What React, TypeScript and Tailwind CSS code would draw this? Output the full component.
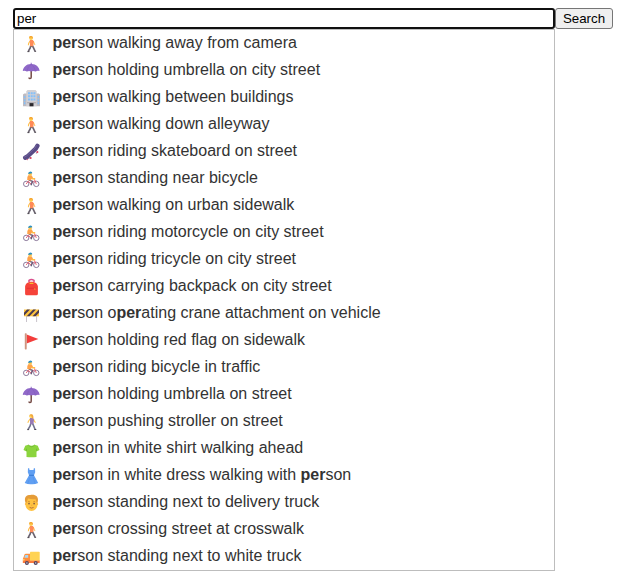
import React from "react";

type IconName =
  | "walk" | "umbrella" | "building" | "skate" | "bike" | "backpack" | "barrier"
  | "flag" | "woman" | "shirt" | "dress" | "man" | "truck";

const rows: [IconName, string][] = [
  ["walk", "person walking away from camera"],
  ["umbrella", "person holding umbrella on city street"],
  ["building", "person walking between buildings"],
  ["walk", "person walking down alleyway"],
  ["skate", "person riding skateboard on street"],
  ["bike", "person standing near bicycle"],
  ["walk", "person walking on urban sidewalk"],
  ["bike", "person riding motorcycle on city street"],
  ["bike", "person riding tricycle on city street"],
  ["backpack", "person carrying backpack on city street"],
  ["barrier", "person operating crane attachment on vehicle"],
  ["flag", "person holding red flag on sidewalk"],
  ["bike", "person riding bicycle in traffic"],
  ["umbrella", "person holding umbrella on street"],
  ["woman", "person pushing stroller on street"],
  ["shirt", "person in white shirt walking ahead"],
  ["dress", "person in white dress walking with person"],
  ["man", "person standing next to delivery truck"],
  ["walk", "person crossing street at crosswalk"],
  ["truck", "person standing next to white truck"],
];

const icons: Record<IconName, React.ReactNode> = {
  walk: (
    <>
      <path d="M8.9 10.2L8.2 13L6.4 16.2M10 10.2L11.4 12.6L13 16" fill="none" stroke="#6b6470" strokeWidth="1.7" />
      <path d="M5.4 16.6h2M12.3 16.3h1.8" stroke="#443e47" strokeWidth="1" />
      <path d="M8 6L6.6 8.4L6.4 10.2M11.2 6L12.2 8.4L13 9.8" fill="none" stroke="#ffc04d" strokeWidth="1.1" />
      <path d="M7.8 4.9h3l1 1.7-.6 4.6H8z" fill="#ff8a58" />
      <circle cx="9" cy="3" r="1.9" fill="#ffc847" />
      <path d="M7 2.8C6.9.5 10.8.4 10.9 2.9l-.6.9-.6-1.4z" fill="#f5a636" />
    </>
  ),
  umbrella: (
    <>
      <path d="M9.2 8V15.2Q9.2 16.6 8 16.6Q7 16.6 7 15.5" fill="none" stroke="#754b46" strokeWidth="1.5" />
      <path d="M8.7.8h1v1.1C14 2 17.4 5 17.6 9.1Q15.7 8.4 13.6 9.4Q11.3 8.5 9.2 9.4Q7 8.5 4.9 9.4Q2.7 8.4.8 9.1C1 5.1 4.4 2 8.7 1.9z" fill="#8f68c8" />
      <path d="M5 9.2Q5.6 4.5 9.2 2.2Q12.8 4.8 13.5 9.2" fill="none" stroke="#7e56b5" strokeWidth=".4" />
    </>
  ),
  building: (
    <>
      <path d="M1 5.6L2.3 4.4H16.8L18 5.6V17.2H1z" fill="#bebbc1" />
      <path d="M4.3 2.2L5.5 1h8l1.2 1.2v15H4.3z" fill="#d2d0d4" />
      <path d="M6 3.2h2v2H6zm2.7 0h2v2h-2zm2.7 0h2v2h-2zM6 6.3h2v2H6zm2.7 0h2v2h-2zm2.7 0h2v2h-2zM6 9.4h2v2H6zm2.7 0h2v2h-2zm2.7 0h2v2h-2zM1.9 7h1.5v2H1.9zm0 3.2h1.5v2H1.9zm0 3.1h1.5v2H1.9zM15.6 7h1.5v2h-1.5zm0 3.2h1.5v2h-1.5zm0 3.1h1.5v2h-1.5z" fill="#84c0fa" />
      <path d="M5 13h9v1.3H5z" fill="#b3b0b6" />
      <path d="M7.5 14.1h4v3.2h-4z" fill="#2b292d" />
    </>
  ),
  skate: (
    <>
      <path d="M6.2 15.8L8.4 14.2M14 10.4L15.8 8.8" stroke="#b3a6b8" strokeWidth="1.3" />
      <path d="M3.2 14.7L5.4 13.5L13.8 5.6L15.4 2.9" fill="none" stroke="#584b86" strokeWidth="4.4" strokeLinecap="round" strokeLinejoin="round" />
      <path d="M2.4 14.1L4.8 12.8L13 5L14.3 2.6" fill="none" stroke="#74679f" strokeWidth=".9" strokeLinecap="round" />
      <circle cx="8.7" cy="14.9" r="1" fill="#d83a5b" />
      <circle cx="15.4" cy="8.9" r="1" fill="#d83a5b" />
      <circle cx="5.3" cy="16.6" r=".6" fill="#d83a5b" />
    </>
  ),
  bike: (
    <>
      <circle cx="4.2" cy="13.9" r="2.7" fill="#fff" stroke="#8d7b9c" strokeWidth="1" />
      <circle cx="14.3" cy="13.9" r="2.7" fill="#fff" stroke="#8d7b9c" strokeWidth="1" />
      <path d="M4.2 13.9L6.3 11.2L8.8 14L12.6 10.8M14.3 13.9L12.5 9.4" fill="none" stroke="#ed5064" strokeWidth=".9" />
      <path d="M6.7 9.9L10.4 11.4L9 15.2" fill="none" stroke="#675d7b" strokeWidth="1.5" />
      <path d="M9.4 6.4L10.7 8.8L13.2 8.8" fill="none" stroke="#ffbd47" strokeWidth="1.4" />
      <path d="M6.2 5.2L9.6 5.3L10.5 7.7L8.6 10.6L5.2 10.1Q4.7 7 6.2 5.2z" fill="#ffa24a" />
      <circle cx="8.2" cy="4" r="1.8" fill="#ffc64d" />
      <path d="M6.1 4Q6.1 1.6 8.4 1.5Q10.4 1.8 10.3 3.3z" fill="#2c91c2" />
    </>
  ),
  backpack: (
    <>
      <path d="M7 4V2.4Q9.4.6 12 2.4V4" fill="none" stroke="#d94f8c" strokeWidth="1.5" />
      <path d="M3.1 8.8C3.1 1.9 15.9 1.9 15.9 8.8V15.8Q15.9 17.3 14.4 17.3H4.6Q3.1 17.3 3.1 15.8z" fill="#f5433a" />
      <path d="M4.8 10.3h9.4" fill="none" stroke="#dc2b33" strokeWidth=".7" />
      <path d="M7.6 4.8h3.8v1.3H7.6zM12.4 10.3h.9v1.4h-.9z" fill="#f6ba2f" />
    </>
  ),
  barrier: (
    <>
      <path d="M4.5 10.5V17M14.6 10.5V17" stroke="#c9c4cc" strokeWidth="1" />
      <path d="M2 4.5h15v6.8H2z" fill="#ffc53f" />
      <path d="M2 7.7L5 4.5H8L2 10.8zM4.7 11.3L11.2 4.5H14L7.5 11.3zM10.5 11.3L17 4.5V7.7L13.5 11.3z" fill="#4b3b50" />
    </>
  ),
  flag: (
    <>
      <path d="M4.6 2.5L16.4 7L4.6 11.6z" fill="#f33d3b" />
      <rect x="2.8" y="1.3" width="1.9" height="16.1" rx=".6" fill="#cf9580" />
    </>
  ),
  woman: (
    <>
      <path d="M9 10L8 13.2L6.1 16.3M10.4 10.2L11.7 13L13 16.2" fill="none" stroke="#72748f" strokeWidth="1.6" />
      <path d="M5.2 16.6h1.9M12.3 16.5h2" stroke="#494351" strokeWidth="1" />
      <path d="M8 6L6.5 8.2L5.8 9.8M11.5 6L12.5 8.4L13.6 9.6" fill="none" stroke="#ffc552" strokeWidth="1.1" />
      <path d="M7.9 5h3.3l.8 2-.7 4.3H8.1z" fill="#987ab5" />
      <circle cx="9" cy="3.2" r="1.8" fill="#ffd45e" />
      <path d="M7.2 2.5Q8 .8 10 1.3Q11.7 2 11.4 5.5H10L9.2 2.8z" fill="#f2a83c" />
    </>
  ),
  shirt: (
    <>
      <path d="M6.2 4.7Q9.5 6.7 12.7 4.7L15.8 5.7L17.5 10L14.5 11.4V16.9Q9.5 17.8 4.5 16.9V11.4L1.5 10L3.2 5.7z" fill="#8bd43d" />
      <path d="M6.3 4.9Q9.5 8.6 12.7 4.9M4.5 11V8.8M14.5 11V8.8" fill="none" stroke="#6cb534" strokeWidth=".7" />
    </>
  ),
  dress: (
    <>
      <path d="M6 1.2h1.2L7.5 3H11.5L11.8 1.2H13L13.2 5.3L12 8.3L16.2 16Q12.8 17.6 9.5 17.3Q6 17.6 2.7 16L7 8.3L5.8 5.2z" fill="#609ff2" />
      <path d="M7 8.3h5" stroke="#397bd5" strokeWidth="1" />
      <path d="M8 10L5.8 16.6M11 10L13 16.6" stroke="#4f8fe8" strokeWidth=".5" />
    </>
  ),
  man: (
    <>
      <ellipse cx="9.5" cy="9.9" rx="6.1" ry="7.2" fill="#ffc342" />
      <path d="M3.4 8.5C1.6 2.6 5.3 1 8.3 1.1C12.6.1 17.6 2.4 15.6 8.5L14.7 9L13.6 5.2Q9.7 5.6 6 4.5L4.5 9z" fill="#e59c38" />
      <circle cx="3.9" cy="10.1" r="1.1" fill="#ffbd41" />
      <circle cx="15.1" cy="10.1" r="1.1" fill="#ffbd41" />
      <path d="M5.8 7.9Q6.8 7 7.9 7.9M11.2 7.9Q12.3 7 13.3 7.9" fill="none" stroke="#b86a28" strokeWidth=".6" />
      <ellipse cx="7" cy="9.6" rx=".7" ry=".95" fill="#644044" />
      <ellipse cx="12.1" cy="9.6" rx=".7" ry=".95" fill="#644044" />
      <path d="M9.1 11.2h1.2" stroke="#e79426" strokeWidth=".6" />
      <path d="M7.6 13.4Q9.6 14.8 11.6 13.4" fill="none" stroke="#a65c38" strokeWidth=".8" />
    </>
  ),
  truck: (
    <>
      <path d="M.9 15V10.7L2.6 6.4Q2.9 5.8 3.8 5.8H8V15z" fill="#ff8f3c" />
      <path d="M3.3 7H6.2V9.8H2.3z" fill="#a7d6f5" />
      <path d="M.9 12.2H17.7V15H.9z" fill="#fb7a3c" />
      <rect x="8" y="3.7" width="9.7" height="8.9" rx=".7" fill="#ffd353" />
      <path d="M.9 11.2h1.6v1.3H.9z" fill="#ffe07b" />
      <circle cx="4.9" cy="15" r="2" fill="#54455f" />
      <circle cx="13.7" cy="15" r="2" fill="#54455f" />
      <circle cx="4.9" cy="15" r=".8" fill="#d1c8d6" />
      <circle cx="13.7" cy="15" r=".8" fill="#d1c8d6" />
    </>
  ),
};

function Highlighted({ text }: { text: string }) {
  return (
    <span className="whitespace-pre">
      {text.split(/(per)/).map((part, i) =>
        part === "per" ? <b key={i} className="font-bold">{part}</b> : part
      )}
    </span>
  );
}

export default function App() {
  return (
    <div className="h-[579px] w-[617px] overflow-hidden bg-white pl-[13px] pt-2 font-['Liberation_Sans',Arial,sans-serif]">
      <div className="flex h-[21px]">
        <input
          defaultValue="per"
          aria-label="Search"
          className="h-[21px] w-[542px] rounded-[3px] border-2 border-[#101010] bg-white px-[2px] py-0 text-[13.333px] leading-[15px] text-black outline-none"
        />
        <button className="h-[21px] w-[58px] rounded-[3px] border border-[#767676] bg-[#efefef] text-center text-[13.333px] leading-[19px] text-black">
          Search
        </button>
      </div>
      <ul className="w-[542px] border border-[#bdbdbd] bg-white">
        {rows.map(([icon, text], i) => (
          <li key={i} className="flex h-[27px] items-start pl-2 text-base leading-[26px] text-[#333]">
            <svg viewBox="0 0 18 18" className="mr-[12.4px] mt-[5px] size-[18px] shrink-0">
              {icons[icon]}
            </svg>
            <Highlighted text={text} />
          </li>
        ))}
      </ul>
    </div>
  );
}
